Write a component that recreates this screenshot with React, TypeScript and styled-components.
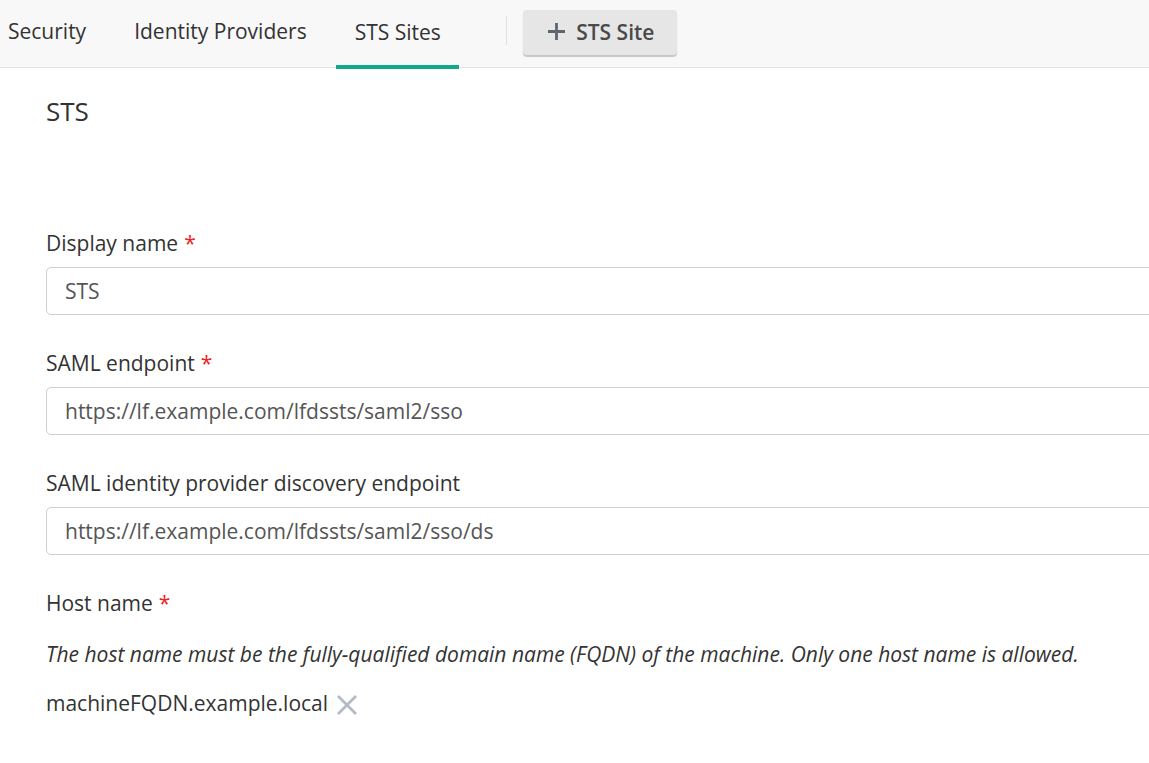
import React from 'react';
import styled, { createGlobalStyle } from 'styled-components';

const GlobalStyle = createGlobalStyle`
    html, body {
        margin: 0;
        padding: 0;
        background: #ffffff;
        font-family: "Open Sans", "Noto Sans", sans-serif;
        color: #333333;
        overflow: hidden;
    }
`;

const Page = styled.div`
    width: 1149px;
    height: 763px;
    overflow: hidden;
`;

const TopBar = styled.div`
    display: flex;
    flex-direction: row;
    align-items: stretch;
    height: 67px;
    background: #f8f8f8;
    border-bottom: 1px solid #e2e2e2;
    padding-left: 8px;
`;

const Tab = styled.div<{ active?: boolean }>`
    display: flex;
    align-items: center;
    margin-right: ${p => (p.active ? '47px' : '48px')};
    margin-left: ${p => (p.active ? '-19px' : '0')};
    padding: 0 ${p => (p.active ? '18px' : '0')} 5px ${p => (p.active ? '19px' : '0')};
    margin-bottom: ${p => (p.active ? '-2px' : '0')};
    font-size: 21px;
    color: #333333;
    box-shadow: ${p => (p.active ? 'inset 0 -4px 0 #13a88a' : 'none')};
`;

const Divider = styled.div`
    width: 1px;
    background: #e0e0e0;
    margin: 16px 16px 22px 0;
`;

const AddButton = styled.button`
    align-self: flex-start;
    margin-top: 10px;
    height: 45px;
    width: 154px;
    display: flex;
    align-items: center;
    justify-content: center;
    gap: 10px;
    border: none;
    border-radius: 4px;
    background: #e6e6e6;
    box-shadow: 0 2px 1px rgba(0, 0, 0, 0.2);
    font-family: "Open Sans", "Noto Sans", sans-serif;
    font-size: 21px;
    font-weight: 600;
    color: #4a4a4a;
    padding: 0 0 2px 2px;
`;

const Content = styled.div`
    padding: 26px 0 0 46px;
`;

const Title = styled.h2`
    margin: 0 0 100px;
    font-size: 26px;
    font-weight: 400;
    line-height: 34px;
    color: #333333;
`;

const Field = styled.div`
    display: flex;
    flex-direction: column;
`;

const Label = styled.label<{ flush?: boolean }>`
    font-size: 21px;
    line-height: 30px;
    color: #333333;
    margin-bottom: ${p => (p.flush ? '0' : '9px')};
`;

const Required = styled.span`
    color: #ee2222;
    margin-left: 6px;
`;

const Input = styled.input`
    box-sizing: border-box;
    width: 1120px;
    height: 48px;
    border: 1px solid #cfcfcf;
    border-radius: 5px;
    padding: 0 18px;
    font-family: "Open Sans", "Noto Sans", sans-serif;
    font-size: 21px;
    color: #555555;
    background: #ffffff;
    outline: none;
    margin-bottom: 33px;
`;

const Hint = styled.div`
    font-size: 21px;
    font-style: italic;
    color: #333333;
    line-height: 30px;
    margin-top: 21px;
`;

const Tag = styled.div`
    display: flex;
    align-items: center;
    gap: 7px;
    margin-top: 19px;
    font-size: 21px;
    line-height: 30px;
    color: #333333;
`;

const RemoveIcon = styled.svg`
    width: 24px;
    height: 24px;
    margin-top: 4px;
`;

const PlusIcon = () => (
    <svg width="19" height="19" viewBox="0 0 19 19">
        <path d="M9.5 1 V18 M1 9.5 H18" stroke="#5f6672" strokeWidth="2.8" fill="none" />
    </svg>
);

export default function App()
{
    return (
        <Page>
            <GlobalStyle />
            <TopBar>
                <Tab>Security</Tab>
                <Tab>Identity Providers</Tab>
                <Tab active>STS Sites</Tab>
                <Divider />
                <AddButton><PlusIcon />STS Site</AddButton>
            </TopBar>
            <Content>
                <Title>STS</Title>
                <Field>
                    <Label>Display name<Required>*</Required></Label>
                    <Input defaultValue="STS" />
                </Field>
                <Field>
                    <Label>SAML endpoint<Required>*</Required></Label>
                    <Input defaultValue="https://lf.example.com/lfdssts/saml2/sso" />
                </Field>
                <Field>
                    <Label>SAML identity provider discovery endpoint</Label>
                    <Input defaultValue="https://lf.example.com/lfdssts/saml2/sso/ds" />
                </Field>
                <Field>
                    <Label flush>Host name<Required>*</Required></Label>
                    <Hint>The host name must be the fully-qualified domain name (FQDN) of the machine. Only one host name is allowed.</Hint>
                    <Tag>
                        machineFQDN.example.local
                        <RemoveIcon viewBox="0 0 24 24">
                            <path d="M3 3 L21 21 M21 3 L3 21" stroke="#b4bac6" strokeWidth="2.8" fill="none" />
                        </RemoveIcon>
                    </Tag>
                </Field>
            </Content>
        </Page>
    );
}
